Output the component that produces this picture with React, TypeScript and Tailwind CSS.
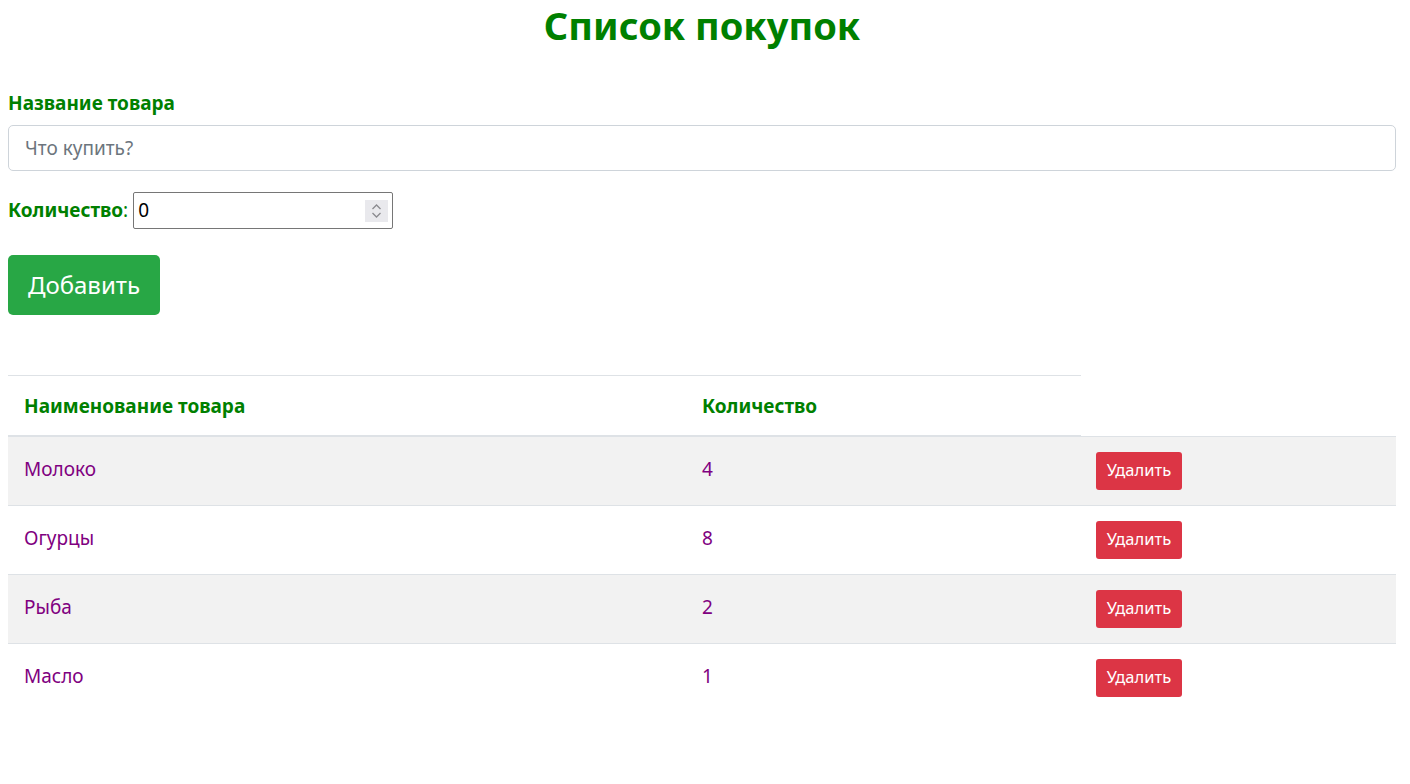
const items = [
  { name: 'Молоко', qty: 4 },
  { name: 'Огурцы', qty: 8 },
  { name: 'Рыба', qty: 2 },
  { name: 'Масло', qty: 1 },
];

export default function App() {
  return (
    <div className="min-h-screen bg-white pl-2 pr-[14px] font-['Noto_Sans','Open_Sans',sans-serif] text-[19px] text-[#212529]">
      <h1 className="pt-[2px] text-center text-[38px] font-bold leading-[46px] text-[#008000]">Список покупок</h1>

      <div className="mt-[42px]">
        <label className="block text-[19px] font-bold leading-[27px] text-[#008000]">Название товара</label>
        <input
          className="mt-2 block h-[46px] w-full rounded-[5px] border border-[#ced4da] px-4 text-[19px] text-[#495057] outline-none placeholder:text-[#6c757d]"
          placeholder="Что купить?"
        />
      </div>

      <div className="mt-[21px] flex items-center">
        <span className="text-[19px] text-[#008000]">
          <b>Количество</b>:
        </span>
        <div className="ml-[5px] flex h-[37px] w-[260px] items-center justify-between rounded-[2px] border border-[#767676] pl-1 pr-1">
          <span className="text-[19px] text-black">0</span>
          <span className="flex h-[22px] w-[23px] items-center justify-center bg-[#e9e9ed]">
            <svg width="11" height="16" viewBox="0 0 11 16" fill="none" stroke="#8a8a8f" strokeWidth="1.3">
              <path d="M1.5 6 L5.5 2 L9.5 6" />
              <path d="M1.5 10 L5.5 14 L9.5 10" />
            </svg>
          </span>
        </div>
      </div>

      <button className="mt-[26px] h-[60px] w-[152px] rounded-[5px] bg-[#28a745] text-[24px] text-white">Добавить</button>

      <table className="mt-[60px] w-full border-collapse">
        <thead>
          <tr>
            <th className="w-[678px] border-t border-b-2 border-[#dee2e6] px-4 pt-4 pb-[15px] text-left text-[19px] leading-[28px] font-bold text-[#008000]">
              Наименование товара
            </th>
            <th className="w-[395px] border-t border-b-2 border-[#dee2e6] px-4 pt-4 pb-[15px] text-left text-[19px] leading-[28px] font-bold text-[#008000]">
              Количество
            </th>
          </tr>
        </thead>
        <tbody>
          {items.map((it, i) => (
            <tr key={it.name} className={i % 2 === 0 ? 'bg-[#f2f2f2]' : 'bg-white'}>
              <td className="border-t border-[#dee2e6] px-4 pt-[13px] pb-[17px] text-[19px] leading-[28px] text-[#800080]">{it.name}</td>
              <td className="border-t border-[#dee2e6] px-4 pt-[13px] pb-[17px] text-[19px] leading-[28px] text-[#800080]">{it.qty}</td>
              <td className="border-t border-[#dee2e6] px-[15px] py-[15px]">
                <button className="block h-[38px] w-[86px] rounded-[3px] bg-[#dc3545] text-[16.5px] text-white">Удалить</button>
              </td>
            </tr>
          ))}
        </tbody>
      </table>
    </div>
  );
}
